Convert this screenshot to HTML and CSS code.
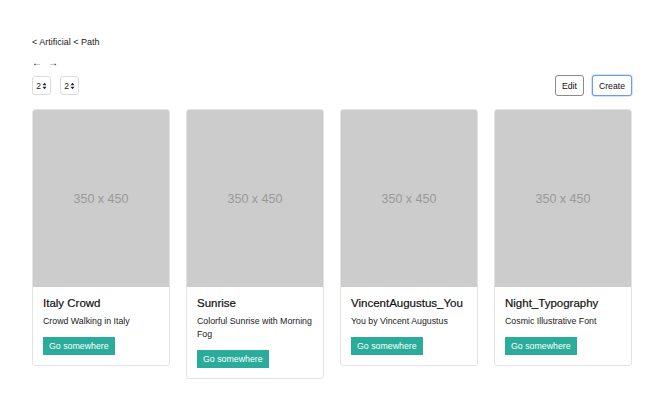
FILE: index.html
```html
<!DOCTYPE html>
<html>
<head>
<meta charset="utf-8">
<link rel="stylesheet" href="styles.css">
</head>
<body>
<div class="page">
  <div class="crumbs">&lt; Artificial &lt; Path</div>
  <div class="arrows"><span>&#8592;</span><span>&#8594;</span></div>
  <div class="toolbar">
    <div class="selects">
      <div class="sel">2<svg width="5" height="8" viewBox="0 0 5 8"><path d="M0.5 3.2 L2.5 0.8 L4.5 3.2 Z M0.5 4.8 L2.5 7.2 L4.5 4.8 Z" fill="#222"/></svg></div>
      <div class="sel">2<svg width="5" height="8" viewBox="0 0 5 8"><path d="M0.5 3.2 L2.5 0.8 L4.5 3.2 Z M0.5 4.8 L2.5 7.2 L4.5 4.8 Z" fill="#222"/></svg></div>
    </div>
    <div class="actions">
      <button class="btn">Edit</button>
      <button class="btn btn-focus">Create</button>
    </div>
  </div>
  <div class="cards">
    <div class="card">
      <div class="ph">350 x 450</div>
      <div class="body">
        <div class="title">Italy Crowd</div>
        <div class="text">Crowd Walking in Italy</div>
        <a class="go">Go somewhere</a>
      </div>
    </div>
    <div class="card">
      <div class="ph">350 x 450</div>
      <div class="body">
        <div class="title">Sunrise</div>
        <div class="text">Colorful Sunrise with Morning Fog</div>
        <a class="go">Go somewhere</a>
      </div>
    </div>
    <div class="card">
      <div class="ph">350 x 450</div>
      <div class="body">
        <div class="title">VincentAugustus_You</div>
        <div class="text">You by Vincent Augustus</div>
        <a class="go">Go somewhere</a>
      </div>
    </div>
    <div class="card">
      <div class="ph">350 x 450</div>
      <div class="body">
        <div class="title">Night_Typography</div>
        <div class="text">Cosmic Illustrative Font</div>
        <a class="go">Go somewhere</a>
      </div>
    </div>
  </div>
</div>
</body>
</html>
```
FILE: styles.css
```css
html, body {
  margin: 0;
  padding: 0;
  background: #fff;
}
body {
  font-family: "Liberation Sans", Arial, sans-serif;
  color: #212529;
}
.page {
  padding: 36px 28px 0 32px;
}
.crumbs {
  font-size: 9px;
  line-height: 12px;
  color: #222;
}
.arrows {
  margin-top: 9px;
  font-size: 10px;
  line-height: 12px;
  display: flex;
  gap: 6px;
  color: #222;
}
.toolbar {
  margin-top: 6px;
  display: flex;
  justify-content: space-between;
  align-items: center;
  height: 21px;
}
.selects {
  display: flex;
  gap: 9px;
}
.sel {
  width: 19px;
  height: 19px;
  box-sizing: border-box;
  border: 1px solid #dcdcdc;
  border-radius: 3px;
  display: flex;
  align-items: center;
  justify-content: center;
  gap: 1px;
  font-size: 8.5px;
  color: #222;
}
.actions {
  display: flex;
  gap: 8px;
}
.btn {
  font-family: "Liberation Sans", Arial, sans-serif;
  font-size: 8.7px;
  height: 21px;
  padding: 0 6px;
  background: #fff;
  border: 1px solid #8a8a8a;
  border-radius: 3px;
  color: #111;
}
.btn-focus {
  border-color: #6d98f5;
  box-shadow: 0 0 0 0.5px #a9c3fb;
}
.cards {
  margin-top: 13px;
  display: flex;
  gap: 16px;
  align-items: flex-start;
}
.card {
  width: 138px;
  box-sizing: border-box;
  border: 1px solid #e3e3e3;
  border-radius: 3px;
  overflow: hidden;
}
.ph {
  height: 177px;
  background: #cccccc;
  color: #999;
  font-size: 12.5px;
  display: flex;
  align-items: center;
  justify-content: center;
}
.body {
  padding: 9px 10px 10px;
}
.title {
  font-size: 11.5px;
  line-height: 14px;
  font-weight: 500;
  color: #111;
  -webkit-text-stroke: 0.2px #111;
}
.text {
  margin-top: 5px;
  font-size: 8.8px;
  line-height: 13px;
  color: #222;
}
.go {
  display: inline-block;
  margin-top: 9px;
  background: #2bac9a;
  color: #fff;
  font-size: 8.8px;
  line-height: 18px;
  padding: 0 6px;
}
```
